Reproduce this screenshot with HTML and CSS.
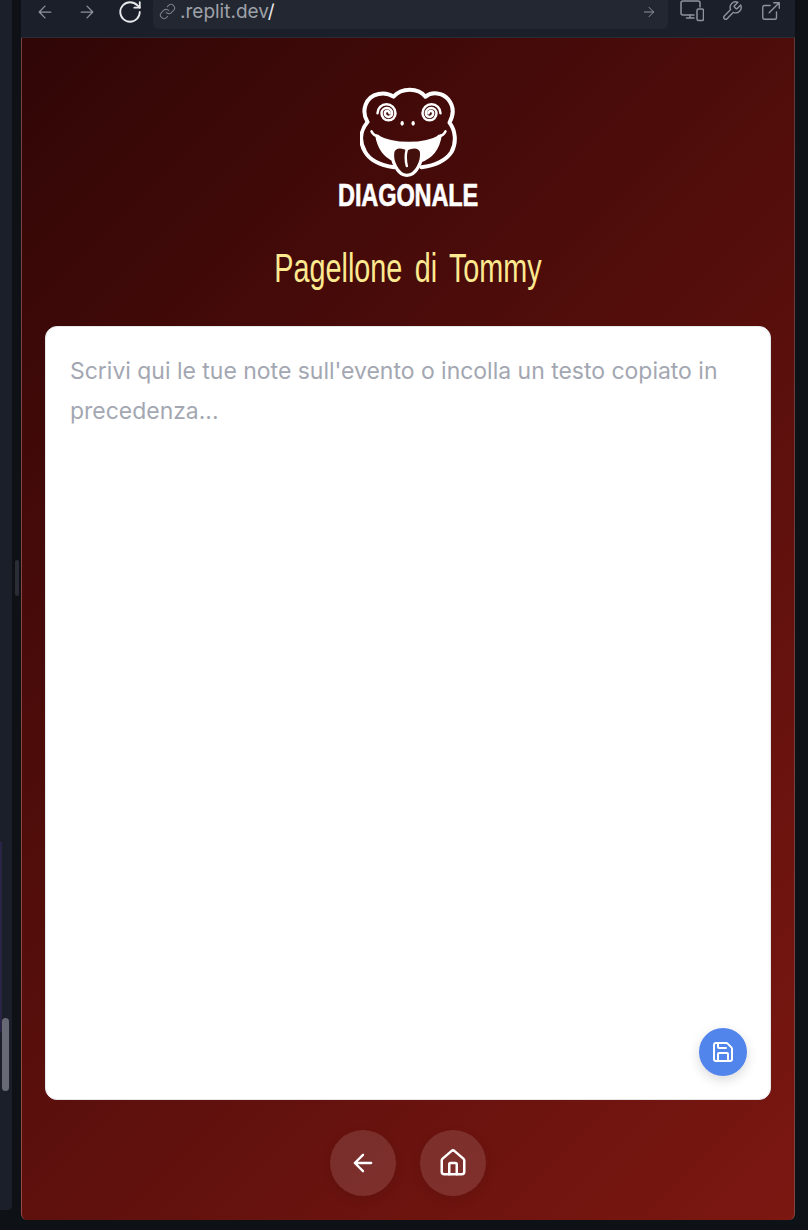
FILE: index.html
```html
<!DOCTYPE html>
<html lang="it">
<head>
<meta charset="utf-8">
<title>Pagellone di Tommy</title>
<link rel="stylesheet" href="styles.css">
</head>
<body>
<aside class="side">
  <div class="side-tint"></div>
  <div class="side-thumb"></div>
</aside>
<div class="gutter"><div class="gutter-handle"></div></div>
<div class="main">
  <header class="toolbar">
    <div class="nav-icons">
      <svg class="ic" width="20" height="20" viewBox="0 0 24 24"><path d="m12 19-7-7 7-7M19 12H5"/></svg>
      <svg class="ic" width="20" height="20" viewBox="0 0 24 24"><path d="M5 12h14M12 5l7 7-7 7"/></svg>
      <svg class="ic ic-reload" width="26" height="26" viewBox="0 0 24 24"><path d="M21 12a9 9 0 1 1-9-9c2.52 0 4.93 1 6.74 2.74L21 8"/><path d="M21 3v5h-5"/></svg>
    </div>
    <div class="address">
      <svg class="ic ic-link" width="17" height="17" viewBox="0 0 24 24"><path d="M10 13a5 5 0 0 0 7.54.54l3-3a5 5 0 0 0-7.07-7.07l-1.72 1.71"/><path d="M14 11a5 5 0 0 0-7.54-.54l-3 3a5 5 0 0 0 7.07 7.07l1.71-1.71"/></svg>
      <span class="url">.replit.dev<span class="url-slash">/</span></span>
      <svg class="ic ic-go" width="16" height="16" viewBox="0 0 24 24"><path d="M5 12h14M12 5l7 7-7 7"/></svg>
    </div>
    <div class="tools">
      <svg class="ic" width="24" height="22" viewBox="0 0 24 22"><path d="M14 15H3a2 2 0 0 1-2-2V3a2 2 0 0 1 2-2h15a2 2 0 0 1 2 2v4"/><path d="M10 15v3M6.500 18H14"/><rect x="17" y="9" width="6.500" height="11.500" rx="1.500"/></svg>
      <svg class="ic" width="22" height="22" viewBox="0 0 24 24"><path d="M14.700 6.300a1 1 0 0 0 0 1.400l1.600 1.600a1 1 0 0 0 1.400 0l3.770-3.770a6 6 0 0 1-7.940 7.940l-6.910 6.910a2.120 2.120 0 0 1-3-3l6.910-6.910a6 6 0 0 1 7.940-7.940l-3.760 3.760z"/></svg>
      <svg class="ic" width="22" height="22" viewBox="0 0 24 24"><path d="M15 3h6v6M10 14 21 3"/><path d="M18 13v6a2 2 0 0 1-2 2H5a2 2 0 0 1-2-2V8a2 2 0 0 1 2-2h6"/></svg>
    </div>
  </header>
  <main class="app">
    <div class="brand">
      <svg class="frog" width="97" height="90" viewBox="120 25 290 270">
        <path class="frog-line" d="M142 130C122 96 136 54 175 46C192 42 208 46 220 54C244 26 294 26 316 54C334 38 368 42 384 62C402 84 400 110 388 132C406 156 410 190 394 220C376 248 346 260 304 266M222 266C182 260 150 248 134 218C116 186 122 154 142 130"/>
        <path class="frog-mouth" d="M168 170C220 200 312 200 362 170C356 208 336 236 302 248L300 214C280 204 240 204 220 214L222 246C194 234 174 208 168 170Z"/>
        <path class="frog-tongue" d="M218 218C226 198 250 204 260 210C272 204 296 198 304 218C308 246 290 290 260 290C232 290 212 246 218 218Z"/>
        <path class="frog-line-thin" d="M260 212C256 226 256 246 260 262"/>
        <path class="frog-line-thin" d="M154 158C158 166 166 172 174 172M376 158C372 166 364 172 356 172"/>
        <path class="frog-line-thin" d="M208 104A6 6 0 0 0 194 104A11 11 0 0 0 216 104A16 16 0 0 0 184 104A21 21 0 0 0 226 104A27 27 0 0 0 172 104"/>
        <path class="frog-line-thin" d="M325 104A7 7 0 0 1 339 104A11 11 0 0 1 317 104A16 16 0 0 1 349 104A21 21 0 0 1 307 104A27 27 0 0 1 361 104"/>
        <ellipse class="frog-dot" cx="246" cy="134" rx="5" ry="7"/>
        <ellipse class="frog-dot" cx="279" cy="134" rx="5" ry="7"/>
      </svg>
      <div class="brand-name">DIAGONALE</div>
    </div>
    <h1 class="title">Pagellone di Tommy</h1>
    <section class="card">
      <textarea class="notes" placeholder="Scrivi qui le tue note sull'evento o incolla un testo copiato in precedenza..."></textarea>
      <button class="save" type="button" aria-label="Salva">
        <svg class="ic ic-white" width="24" height="24" viewBox="0 0 24 24"><path d="M15.200 3a2 2 0 0 1 1.400.6l3.800 3.800a2 2 0 0 1 .6 1.400V19a2 2 0 0 1-2 2H5a2 2 0 0 1-2-2V5a2 2 0 0 1 2-2z"/><path d="M17 21v-7a1 1 0 0 0-1-1H8a1 1 0 0 0-1 1v7"/><path d="M7 3v4a1 1 0 0 0 1 1h7"/></svg>
      </button>
    </section>
    <nav class="bottom-nav">
      <button class="round" type="button" aria-label="Indietro">
        <svg class="ic ic-white" width="28" height="28" viewBox="0 0 24 24"><path d="m12 19-7-7 7-7M19 12H5"/></svg>
      </button>
      <button class="round" type="button" aria-label="Home">
        <svg class="ic ic-white" width="30" height="30" viewBox="0 0 24 24"><path d="M15 21v-8a1 1 0 0 0-1-1h-4a1 1 0 0 0-1 1v8"/><path d="M3 10a2 2 0 0 1 .709-1.528l7-5.999a2 2 0 0 1 2.582 0l7 5.999A2 2 0 0 1 21 10v9a2 2 0 0 1-2 2H5a2 2 0 0 1-2-2z"/></svg>
      </button>
    </nav>
  </main>
</div>
</body>
</html>
```
FILE: styles.css
```css
* { box-sizing: border-box; }
html, body { margin: 0; height: 1230px; overflow: hidden; }
body {
  display: flex;
  background: #0e1116;
  font-family: Inter, "Liberation Sans", sans-serif;
}
.side {
  position: relative;
  width: 12px;
  height: 1210px;
  background: #1b1f29;
  border-radius: 0 0 4px 0;
}
.side-tint {
  position: absolute;
  left: 0;
  top: 842px;
  width: 2px;
  height: 190px;
  background: #2a2547;
}
.side-thumb {
  position: absolute;
  left: 2px;
  top: 1018px;
  width: 7px;
  height: 73px;
  border-radius: 4px;
  background: #676a74;
}
.gutter {
  position: relative;
  width: 9px;
}
.gutter-handle {
  position: absolute;
  left: 3px;
  top: 560px;
  width: 4px;
  height: 36px;
  border-radius: 2px;
  background: #2a2d36;
}
.main {
  width: 774px;
  height: 1220px;
  display: flex;
  flex-direction: column;
}
.ic {
  fill: none;
  stroke: #8f939c;
  stroke-width: 1.500;
  stroke-linecap: round;
  stroke-linejoin: round;
  flex: none;
}
.ic-white { stroke: #fff; stroke-width: 2; }
.ic-reload { stroke: #e8e9ec; stroke-width: 1.700; }
.toolbar {
  height: 38px;
  flex: none;
  display: flex;
  align-items: flex-start;
  background: #1b1f29;
  border-bottom: 1px solid #2a2d35;
}
.nav-icons {
  width: 132px;
  flex: none;
  padding: 1px 0 0 14px;
  display: flex;
  align-items: center;
  gap: 22px;
  height: 22px;
}
.nav-icons .ic-reload { margin-left: -2px; }
.address {
  width: 515px;
  height: 29px;
  flex: none;
  display: flex;
  align-items: center;
  padding: 0 11px 6px 6px;
  background: #232731;
  border-radius: 0 0 6px 6px;
}
.ic-link { opacity: .8; }
.url {
  margin-left: 4px;
  font-size: 19px;
  color: #9da1a9;
  flex: 1;
}
.url-slash { color: #e8e9ec; }
.tools {
  flex: 1;
  display: flex;
  align-items: center;
  gap: 17px;
  padding: 0 0 0 12px;
  height: 22px;
}
.app {
  flex: 1;
  display: flex;
  flex-direction: column;
  align-items: stretch;
  padding: 49px 23px 24px;
  background: linear-gradient(135deg, #300606, #7c1711);
  border: 1px solid rgba(255, 255, 255, .22);
  border-top: 0;
  border-bottom: 0;
  border-radius: 0 0 6px 6px;
}
.brand {
  display: flex;
  flex-direction: column;
  align-items: center;
}
.frog { display: block; }
.frog-line { fill: none; stroke: #fff; stroke-width: 12; stroke-linecap: round; stroke-linejoin: round; }
.frog-mouth { fill: #fff; stroke: #fff; stroke-width: 6; stroke-linejoin: round; }
.frog-tongue { fill: #43100c; stroke: #fff; stroke-width: 10; }
.frog-line-thin { fill: none; stroke: #fff; stroke-width: 7.500; stroke-linecap: round; }
.frog-dot { fill: #fff; }
.brand-name {
  margin-top: 3px;
  font-family: "Liberation Sans", sans-serif;
  font-weight: 700;
  font-size: 31px;
  line-height: 32px;
  letter-spacing: -.2px;
  color: #fff;
  -webkit-text-stroke: .6px #fff;
  transform: scaleX(.76);
}
.title {
  margin: 34px 0 36px;
  text-align: center;
  font-family: "Liberation Sans", sans-serif;
  font-weight: 400;
  font-size: 40px;
  line-height: 44px;
  word-spacing: 6px;
  color: #fde98f;
  transform: scaleX(.72);
}
.card {
  position: relative;
  flex: 1;
  display: flex;
  background: #fff;
  border: 1px solid #e5e7eb;
  border-radius: 12px;
}
.notes {
  flex: 1;
  border: 0;
  outline: 0;
  resize: none;
  padding: 24px;
  background: transparent;
  border-radius: 12px;
  font-family: Inter, "Liberation Sans", sans-serif;
  font-size: 22.960px;
  line-height: 40px;
}
.notes::placeholder { color: #a3a7b2; opacity: 1; }
.save {
  position: absolute;
  right: 23px;
  bottom: 23px;
  width: 48px;
  height: 48px;
  padding: 0;
  display: flex;
  align-items: center;
  justify-content: center;
  border: 0;
  border-radius: 50%;
  background: #5185ec;
  box-shadow: 0 4px 12px rgba(0, 0, 0, .15);
}
.bottom-nav {
  flex: none;
  display: flex;
  justify-content: center;
  gap: 24px;
  margin-top: 30px;
}
.round {
  width: 66px;
  height: 66px;
  padding: 0;
  display: flex;
  align-items: center;
  justify-content: center;
  border: 0;
  border-radius: 50%;
  background: rgba(255, 255, 255, .12);
  box-shadow: 0 4px 12px rgba(0, 0, 0, .08);
}
```
